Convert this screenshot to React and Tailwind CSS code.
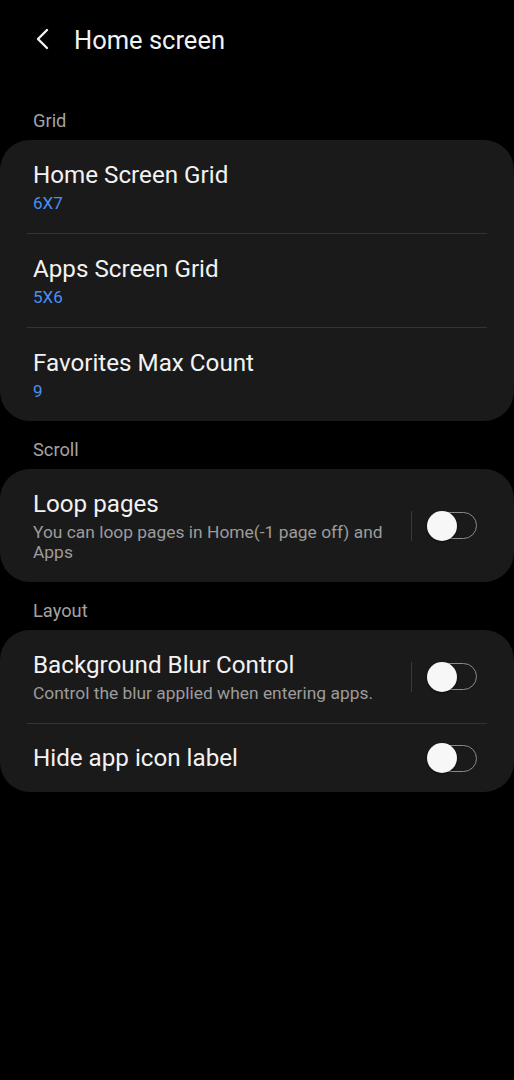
const font = { fontFamily: 'Roboto, "Noto Sans", sans-serif' };

const Toggle = () => (
  <div className="relative h-[27px] w-[49px] shrink-0 rounded-full border-[1.5px] border-[#8a8a8a]">
    <div className="absolute left-[-2px] top-1/2 h-[30px] w-[30px] -translate-y-1/2 rounded-full bg-[#f7f7f7] shadow-[0_1px_2px_rgba(0,0,0,0.6)]" />
  </div>
);

const SectionLabel = ({ children, className = '' }) => (
  <div className={`px-[33px] pb-[7px] text-[18.3px] leading-[24px] text-[#a3a3a3] ${className}`}>{children}</div>
);

const Divider = () => <div className="mx-[27px] h-px bg-[#333333]" />;

const ValueRow = ({ title, value }) => (
  <div className="px-[33px] py-5">
    <div className="text-[24.2px] leading-[30px] text-[#f2f2f2]">{title}</div>
    <div className="mt-[3px] text-[17px] leading-[20px] text-[#4a8ff5]">{value}</div>
  </div>
);

const SwitchRow = ({ title, sub, separator = true, className = 'py-5' }) => (
  <div className={`flex items-center pl-[33px] pr-[37px] ${className}`}>
    <div className="min-w-0 flex-1 pr-4">
      <div className="text-[24.2px] leading-[30px] text-[#f2f2f2]">{title}</div>
      {sub && <div className="mt-[3px] text-[17.4px] leading-[20px] text-[#9c9c9c]">{sub}</div>}
    </div>
    {separator && <div className="mr-4 h-[30px] w-px bg-[#3a3a3a]" />}
    <Toggle />
  </div>
);

export default function App() {
  return (
    <div className="min-h-[1080px] w-full bg-black" style={font}>
      <div className="flex h-[80px] items-center pl-[34px]">
        <svg width="18" height="24" viewBox="0 0 18 24" className="mt-[-2px]">
          <path d="M13 3 L4 12 L13 21" fill="none" stroke="#f2f2f2" strokeWidth="2.4" strokeLinecap="round" strokeLinejoin="round" />
        </svg>
        <div className="ml-[22px] text-[25.5px] leading-[32px] text-[#f2f2f2]">Home screen</div>
      </div>

      <SectionLabel className="pt-[29px]">Grid</SectionLabel>
      <div className="rounded-[30px] bg-[#1a1a1a]">
        <ValueRow title="Home Screen Grid" value="6X7" />
        <Divider />
        <ValueRow title="Apps Screen Grid" value="5X6" />
        <Divider />
        <ValueRow title="Favorites Max Count" value="9" />
      </div>

      <SectionLabel className="pt-[17px]">Scroll</SectionLabel>
      <div className="rounded-[30px] bg-[#1a1a1a]">
        <SwitchRow title="Loop pages" sub="You can loop pages in Home(-1 page off) and Apps" />
      </div>

      <SectionLabel className="pt-[17px]">Layout</SectionLabel>
      <div className="rounded-[30px] bg-[#1a1a1a]">
        <SwitchRow title="Background Blur Control" sub="Control the blur applied when entering apps." />
        <Divider />
        <SwitchRow title="Hide app icon label" separator={false} className="py-[19px]" />
      </div>
    </div>
  );
}
